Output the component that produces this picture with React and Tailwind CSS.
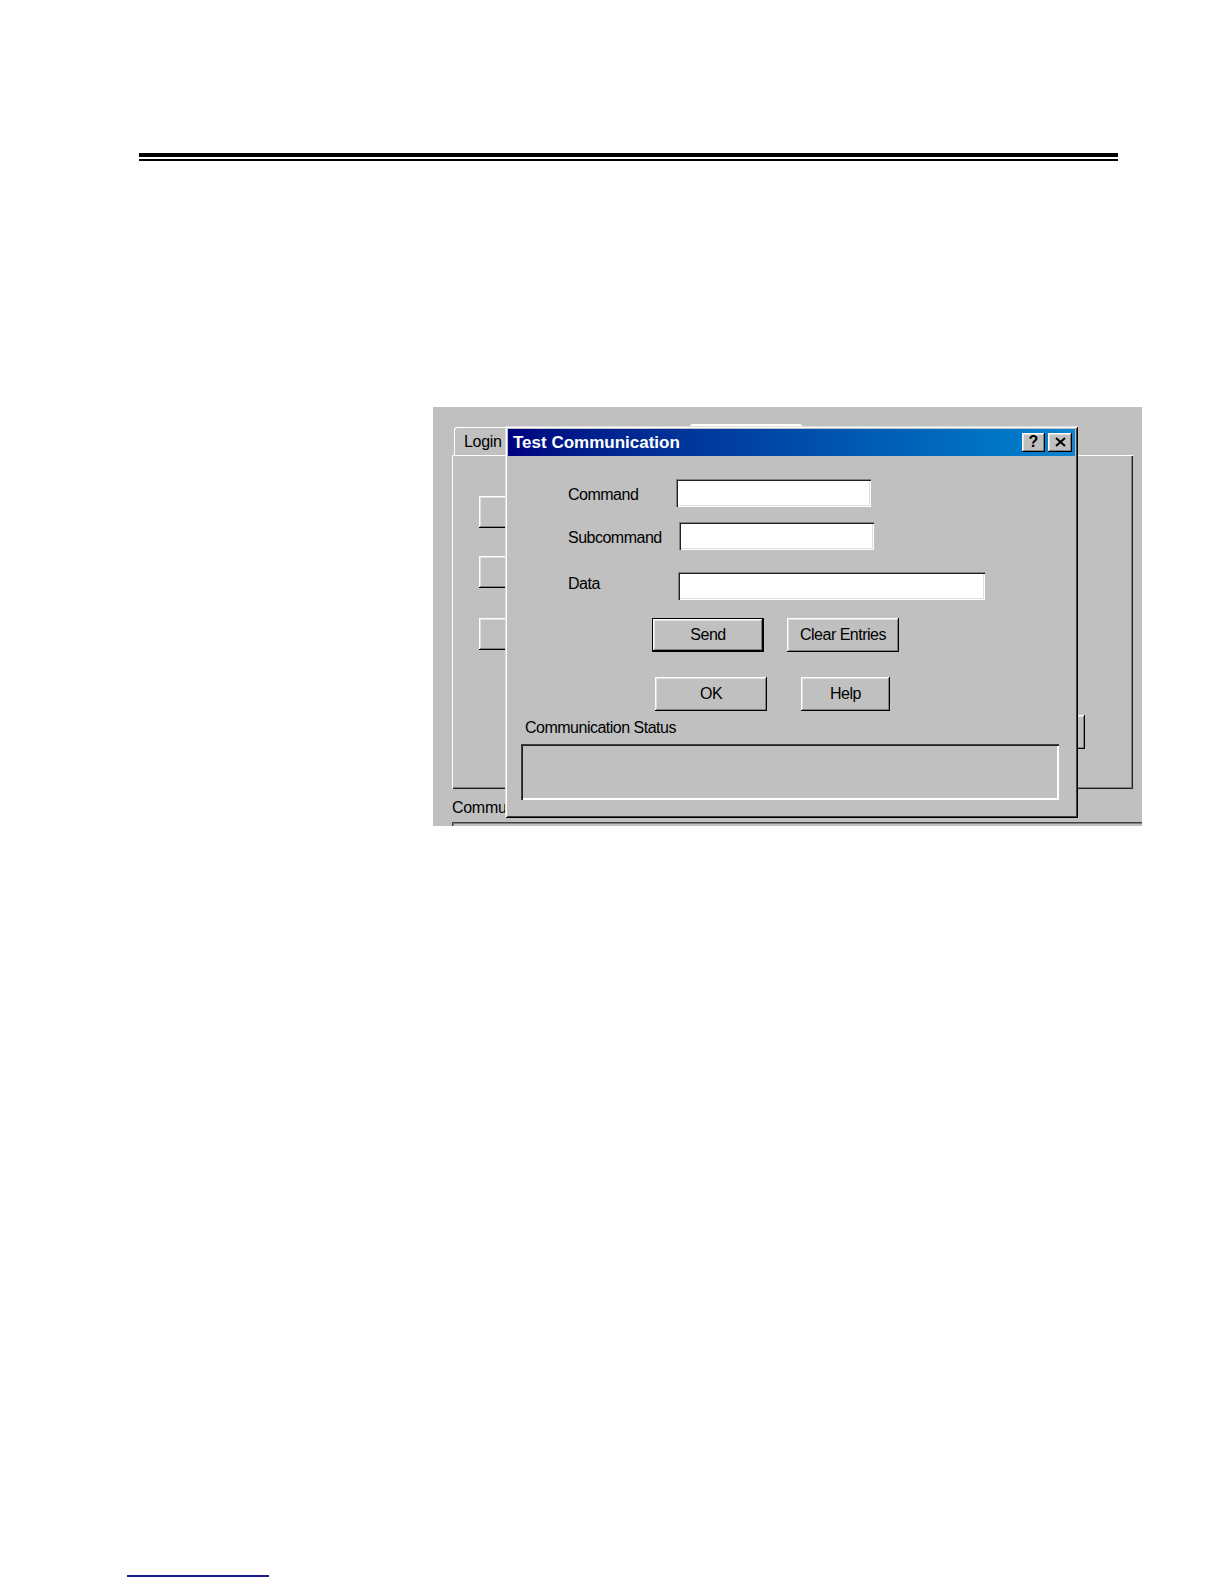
const font = "font-['Liberation_Sans',Arial,sans-serif]";

// win9x bevels
const raised =
  "shadow-[inset_-1px_-1px_0_#000,inset_1px_1px_0_#fff,inset_-2px_-2px_0_#808080,inset_2px_2px_0_#dfdfdf]";
const sunkenWhite =
  "shadow-[inset_1px_1px_0_#808080,inset_2px_2px_0_#202020,inset_-1px_-1px_0_#fff,inset_-2px_-2px_0_#dfdfdf]";

function Btn({ children, className = "", isDefault = false }) {
  return (
    <div className={`${className} ${isDefault ? "border border-black" : ""}`}>
      <div
        className={`flex h-full w-full items-center justify-center bg-[#c0c0c0] text-[16px] leading-[18px] tracking-[-0.5px] text-black ${raised}`}
      >
        {children}
      </div>
    </div>
  );
}

function Field({ label, labelClass, inputClass, rowClass }) {
  return (
    <div className={`flex items-center pl-[60px] ${rowClass}`}>
      <div
        className={`text-[16px] leading-[18px] tracking-[-0.5px] text-black ${labelClass}`}
      >
        {label}
      </div>
      <div className={`h-[28px] bg-white ${sunkenWhite} ${inputClass}`} />
    </div>
  );
}

function Dialog() {
  return (
    <div className="absolute left-[72px] top-[19px] h-[392px] w-[573px] bg-[#c0c0c0] p-[3px] shadow-[inset_1px_1px_0_#dfdfdf,inset_-1px_-1px_0_#000,inset_2px_2px_0_#fff,inset_-2px_-2px_0_#404040]">
      <div className="flex h-[27px] items-center justify-between bg-linear-to-r from-[#000080] to-[#1084d0] pl-[5px] pr-[3px]">
        <span className="pt-[1px] text-[17px] font-bold leading-[20px] text-white">
          Test Communication
        </span>
        <div className="flex gap-[3px]">
          <div
            className={`flex h-[19px] w-[23px] items-center justify-center bg-[#c0c0c0] pb-[1px] text-[16px] font-bold leading-none text-black ${raised}`}
          >
            ?
          </div>
          <div
            className={`flex h-[19px] w-[24px] items-center justify-center bg-[#c0c0c0] pb-[1px] ${raised}`}
          >
            <svg width="11" height="10" viewBox="0 0 11 10">
              <path
                d="M1 1 L10 9 M10 1 L1 9"
                stroke="#000"
                strokeWidth="2"
                fill="none"
              />
            </svg>
          </div>
        </div>
      </div>

      <Field
        label="Command"
        rowClass="mt-[23px]"
        labelClass="w-[108px] mt-[4px]"
        inputClass="w-[195px]"
      />
      <Field
        label="Subcommand"
        rowClass="mt-[15px]"
        labelClass="w-[111px] mt-[4px]"
        inputClass="w-[195px]"
      />
      <Field
        label="Data"
        rowClass="mt-[22px]"
        labelClass="w-[110px] -mt-[5px]"
        inputClass="w-[307px]"
      />

      <div className="mt-[18px] flex gap-[23px] pl-[144px]">
        <Btn className="h-[34px] w-[112px]" isDefault>
          Send
        </Btn>
        <Btn className="h-[34px] w-[112px]">Clear Entries</Btn>
      </div>

      <div className="mt-[25px] flex gap-[34px] pl-[147px]">
        <Btn className="h-[34px] w-[112px]">OK</Btn>
        <Btn className="h-[34px] w-[89px]">Help</Btn>
      </div>

      <div className="mt-[8px] pl-[17px] text-[16px] leading-[18px] tracking-[-0.5px] text-black">
        Communication Status
      </div>
      <div className="ml-[13px] mt-[7px] h-[56px] w-[538px] shadow-[inset_1px_1px_0_#404040,inset_2px_2px_0_#202020,inset_-1px_-1px_0_#fff,inset_-2px_-2px_0_#fff]" />
    </div>
  );
}

function Screenshot() {
  return (
    <div className="relative ml-[433px] mt-[246px] h-[419px] w-[709px] overflow-hidden bg-[#c0c0c0]">
      {/* window behind the dialog */}
      <div className="mt-[17px] flex h-[31px] items-end">
        <div className="ml-[21px] h-[28px] w-[90px] rounded-t-[3px] pl-[10px] pt-[6px] text-[16px] leading-[18px] tracking-[-0.3px] text-black shadow-[inset_1px_1px_0_#fff,inset_-1px_0_0_#404040]">
          Login
        </div>
        <div className="ml-[146px] h-[31px] w-[113px] rounded-t-[3px] shadow-[inset_1px_2px_0_#fff,inset_-1px_0_0_#404040]" />
      </div>

      <div className="ml-[19px] flex h-[334px] w-[681px] justify-between pl-[27px] pr-[48px] shadow-[inset_1px_1px_0_#fff,inset_-1px_-1px_0_#202020,inset_-2px_-2px_0_#808080]">
        <div className="flex flex-col pt-[41px]">
          <Btn className="h-[32px] w-[60px]" />
          <Btn className="mt-[28px] h-[32px] w-[60px]" />
          <Btn className="mt-[30px] h-[32px] w-[60px]" />
        </div>
        <div className="pt-[260px]">
          <Btn className="h-[34px] w-[100px]">Logout</Btn>
        </div>
      </div>

      <div className="ml-[19px] mt-[10px] text-[16px] leading-[18px] tracking-[-0.3px] text-black">
        Communication Status
      </div>
      <div className="ml-[19px] mt-[5px] h-[40px] w-[690px] bg-[#c0c0c0] shadow-[inset_1px_1px_0_#404040,inset_2px_2px_0_#808080]" />

      <Dialog />
    </div>
  );
}

export default function App() {
  return (
    <div
      className={`flex h-[1584px] w-[1224px] flex-col overflow-hidden bg-white ${font}`}
    >
      <div className="ml-[139px] mt-[153px] w-[979px]">
        <div className="h-[4px] bg-black" />
        <div className="mt-[2px] h-[2px] bg-black" />
      </div>

      <Screenshot />

      <div className="ml-[127px] mt-[749px] h-[2px] w-[142px] bg-[#1c1c8c]" />
    </div>
  );
}
